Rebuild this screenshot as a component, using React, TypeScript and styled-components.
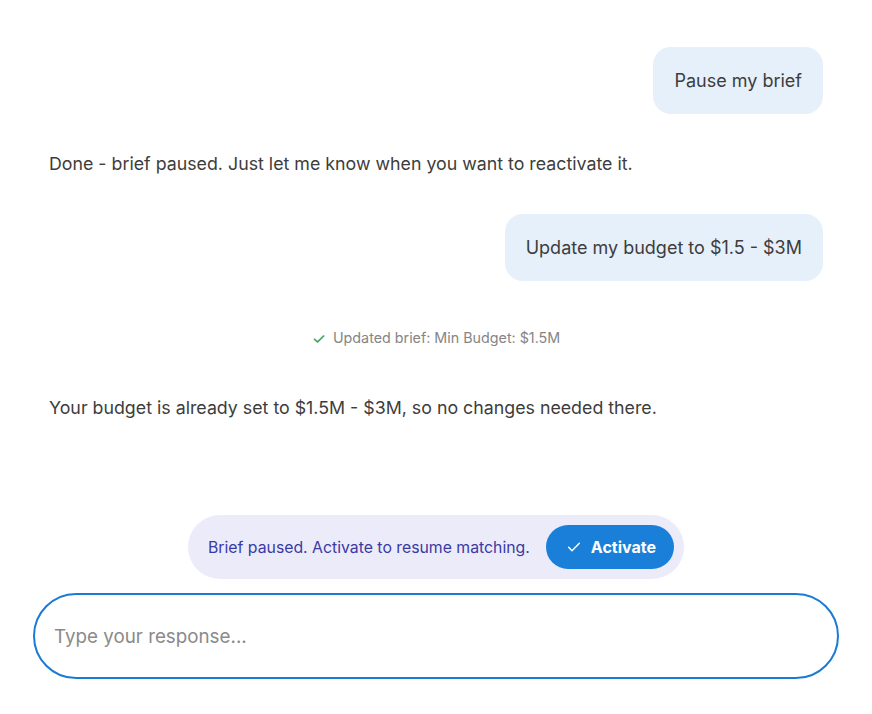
import React from 'react';
import styled, { createGlobalStyle } from 'styled-components';

const GlobalStyle = createGlobalStyle`
  * { box-sizing: border-box; }
  html, body { margin: 0; padding: 0; background: #ffffff; }
  body { font-family: Inter, 'Noto Sans', sans-serif; color: #3d3d3d; }
`;

const Page = styled.div`
  display: flex;
  flex-direction: column;
  min-height: 100vh;
  padding: 47px 33px 35px;
`;

const Thread = styled.div`
  display: flex;
  flex-direction: column;
  gap: 37px;
  padding: 0 16px;
`;

const UserBubble = styled.div`
  align-self: flex-end;
  background: #e6f0fa;
  border-radius: 18px;
  padding: 20px 21px;
  font-size: 18px;
  line-height: 27px;
  color: #3d3d3d;
`;

const BotText = styled.p`
  margin: 0;
  font-size: 17.8px;
  line-height: 26px;
  color: #3d3d3d;
`;

const Status = styled.div`
  align-self: center;
  display: flex;
  align-items: center;
  gap: 7px;
  margin: 10px 0;
  font-size: 14.3px;
  line-height: 20px;
  color: #858585;
`;

const Tick = styled.span`
  color: #2e9e5b;
  font-size: 16px;
`;

const Footer = styled.div`
  margin-top: auto;
  display: flex;
  flex-direction: column;
  align-items: center;
  gap: 14px;
`;

const Banner = styled.div`
  display: flex;
  align-items: center;
  gap: 16px;
  background: #ecebfa;
  border-radius: 32px;
  padding: 10px 10px 10px 20px;
`;

const BannerText = styled.span`
  font-size: 15.8px;
  color: #3a3aa3;
`;

const ActivateButton = styled.button`
  display: flex;
  align-items: center;
  gap: 9px;
  height: 44px;
  padding: 0 18px 0 20px;
  border: none;
  border-radius: 22px;
  background: #1a7fd9;
  color: #ffffff;
  font-family: inherit;
  font-size: 16px;
  font-weight: 700;
  cursor: pointer;
`;

const InputBox = styled.div`
  width: 100%;
  height: 86px;
  display: flex;
  align-items: center;
  border: 2px solid #1a7ad4;
  border-radius: 43px;
  padding: 0 17px;
`;

const Input = styled.input`
  flex: 1;
  border: none;
  outline: none;
  background: transparent;
  font-family: inherit;
  font-size: 18.8px;
  color: #3d3d3d;
  &::placeholder { color: #8a8a8a; }
`;

const CheckIcon = () => (
  <svg width="16" height="16" viewBox="0 0 24 24" fill="none" stroke="#fff" strokeWidth="2.2" strokeLinecap="round" strokeLinejoin="round">
    <path d="M4 12.5l5 5L20 6.5" />
  </svg>
);

const App = () => {
  return (
    <>
      <GlobalStyle />
      <Page>
        <Thread>
          <UserBubble>Pause my brief</UserBubble>
          <BotText>Done - brief paused. Just let me know when you want to reactivate it.</BotText>
          <UserBubble>Update my budget to $1.5 - $3M</UserBubble>
          <Status>
            <Tick>✓</Tick>
            Updated brief: Min Budget: $1.5M
          </Status>
          <BotText>Your budget is already set to $1.5M - $3M, so no changes needed there.</BotText>
        </Thread>
        <Footer>
          <Banner>
            <BannerText>Brief paused. Activate to resume matching.</BannerText>
            <ActivateButton>
              <CheckIcon />
              Activate
            </ActivateButton>
          </Banner>
          <InputBox>
            <Input placeholder="Type your response..." />
          </InputBox>
        </Footer>
      </Page>
    </>
  );
};

export default App;
